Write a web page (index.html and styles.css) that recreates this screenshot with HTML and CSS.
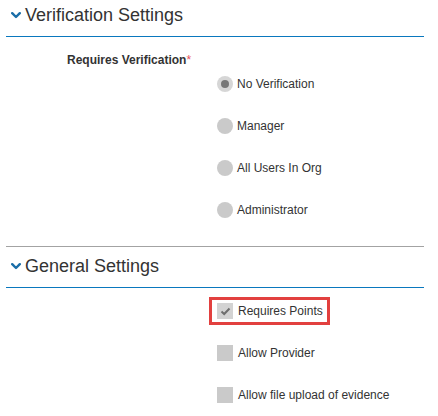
FILE: index.html
```html
<!DOCTYPE html>
<html>
<head>
<meta charset="utf-8">
<link rel="stylesheet" href="styles.css">
</head>
<body>
<div class="page">
  <section class="section">
    <h2 class="heading">
      <svg class="chev" width="10" height="7" viewBox="0 0 10 7"><path d="M1.2 1.2 L5 5 L8.8 1.2" fill="none" stroke="#1a6ea8" stroke-width="2.4" stroke-linecap="round" stroke-linejoin="round"/></svg>
      <span>Verification Settings</span>
    </h2>
    <div class="body">
      <div class="field-label">Requires Verification<span class="req">*</span></div>
      <div class="options">
        <label class="option"><span class="radio checked"></span>No Verification</label>
        <label class="option"><span class="radio"></span>Manager</label>
        <label class="option"><span class="radio"></span>All Users In Org</label>
        <label class="option"><span class="radio"></span>Administrator</label>
      </div>
    </div>
  </section>
  <section class="section second">
    <h2 class="heading">
      <svg class="chev" width="10" height="7" viewBox="0 0 10 7"><path d="M1.2 1.2 L5 5 L8.8 1.2" fill="none" stroke="#1a6ea8" stroke-width="2.4" stroke-linecap="round" stroke-linejoin="round"/></svg>
      <span>General Settings</span>
    </h2>
    <div class="checks">
      <label class="check highlight"><span class="box checked"><svg width="11" height="9" viewBox="0 0 11 9"><path d="M1.5 4.5 L4.2 7 L9.5 1.5" fill="none" stroke="#6f6f6f" stroke-width="2"/></svg></span>Requires Points</label>
      <label class="check"><span class="box"></span>Allow Provider</label>
      <label class="check"><span class="box"></span>Allow file upload of evidence</label>
    </div>
  </section>
</div>
</body>
</html>
```
FILE: styles.css
```css
html, body {
  margin: 0;
  padding: 0;
  background: #fff;
}
body {
  font-family: "Liberation Sans", Arial, sans-serif;
  color: #333;
}
.page {
  margin-left: 6px;
  width: 418px;
}
.section {
  padding-bottom: 28px;
}
.second {
  border-top: 1px solid #a3a3a3;
  padding-top: 4px;
  padding-bottom: 0;
}
.heading {
  margin: 0;
  padding: 3px 0 9px 5px;
  font-size: 18px;
  line-height: 24px;
  font-weight: normal;
  color: #333;
  border-bottom: 1px solid #0a78be;
  display: flex;
  align-items: center;
  gap: 4px;
}
.chev {
  display: block;
  margin-top: 1px;
}
.body {
  padding-top: 15px;
}
.field-label {
  padding-left: 61px;
  font-size: 12px;
  line-height: 16px;
  font-weight: bold;
}
.req {
  color: #e8535b;
  font-weight: normal;
}
.options {
  margin-top: 8px;
  padding-left: 211px;
  display: flex;
  flex-direction: column;
  gap: 26px;
}
.option {
  display: flex;
  align-items: center;
  gap: 4px;
  font-size: 12px;
  line-height: 16px;
  height: 16px;
}
.radio {
  width: 16px;
  height: 16px;
  border-radius: 50%;
  background: #cacaca;
  display: flex;
  align-items: center;
  justify-content: center;
}
.radio.checked {
  background: #d6d6d6;
}
.radio.checked::after {
  content: "";
  width: 8px;
  height: 8px;
  border-radius: 50%;
  background: #777;
}
.checks {
  padding-top: 9px;
  padding-left: 203px;
  display: flex;
  flex-direction: column;
  gap: 14px;
  align-items: flex-start;
}
.check {
  display: flex;
  align-items: center;
  gap: 5px;
  font-size: 12px;
  line-height: 16px;
  height: 16px;
  border: 3px solid transparent;
  padding: 3px 4px 3px 5px;
}
.highlight {
  border-color: #e2403f;
}
.box {
  width: 16px;
  height: 16px;
  background: #cacaca;
  display: flex;
  align-items: center;
  justify-content: center;
}
.box.checked {
  background: #d3d3d3;
}
.box svg {
  display: block;
}
```
